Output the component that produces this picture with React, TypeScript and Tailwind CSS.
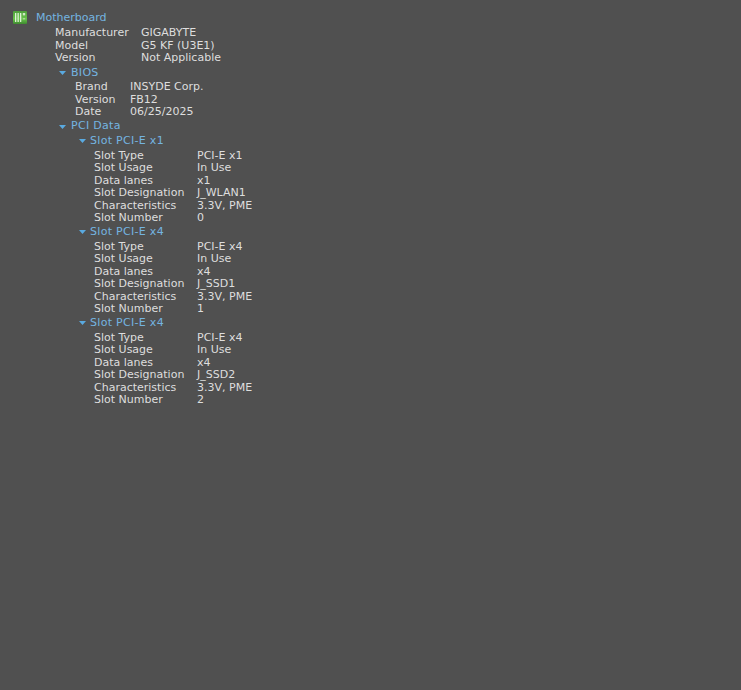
import React from 'react'

type Row = [string, string]

const slots: { title: string; rows: Row[] }[] = [
  {
    title: 'Slot PCI-E x1',
    rows: [
      ['Slot Type', 'PCI-E x1'],
      ['Slot Usage', 'In Use'],
      ['Data lanes', 'x1'],
      ['Slot Designation', 'J_WLAN1'],
      ['Characteristics', '3.3V, PME'],
      ['Slot Number', '0'],
    ],
  },
  {
    title: 'Slot PCI-E x4',
    rows: [
      ['Slot Type', 'PCI-E x4'],
      ['Slot Usage', 'In Use'],
      ['Data lanes', 'x4'],
      ['Slot Designation', 'J_SSD1'],
      ['Characteristics', '3.3V, PME'],
      ['Slot Number', '1'],
    ],
  },
  {
    title: 'Slot PCI-E x4',
    rows: [
      ['Slot Type', 'PCI-E x4'],
      ['Slot Usage', 'In Use'],
      ['Data lanes', 'x4'],
      ['Slot Designation', 'J_SSD2'],
      ['Characteristics', '3.3V, PME'],
      ['Slot Number', '2'],
    ],
  },
]

function BoardIcon() {
  return (
    <svg width="14" height="13" viewBox="0 0 14 13" className="block -mt-[2px]">
      <defs>
        <linearGradient id="board" x1="0" y1="0" x2="0" y2="1">
          <stop offset="0" stopColor="#4f9f3c" />
          <stop offset="0.6" stopColor="#68c44a" />
          <stop offset="1" stopColor="#3f8a30" />
        </linearGradient>
      </defs>
      <rect width="14" height="13" rx="1" fill="url(#board)" />
      <rect x="2" y="2" width="1.3" height="9" fill="#dff2d6" />
      <rect x="4.5" y="2" width="1.3" height="9" fill="#dff2d6" />
      <rect x="7" y="2" width="1.3" height="9" fill="#dff2d6" />
      <rect x="9.8" y="2" width="2.4" height="2.4" fill="#cfe9c4" />
      <rect x="9.8" y="7" width="2.4" height="1.5" fill="#a9d998" />
    </svg>
  )
}

function Header({ title, slot }: { title: string; slot?: boolean }) {
  return (
    <div
      className={
        slot
          ? 'flex items-center h-[16.6px] pb-px text-[#74b4e0] tracking-[0.3px]'
          : 'flex items-center h-[16.6px] text-[#74b4e0] tracking-[0.3px]'
      }
    >
      <svg width="7" height="4" viewBox="0 0 7 4" className="mr-[5px] shrink-0">
        <path d="M0 0h7L3.5 4z" fill="#5aaae0" />
      </svg>
      <span className={slot ? '-ml-px' : ''}>{title}</span>
    </div>
  )
}

function Rows({ rows, labelWidth }: { rows: Row[]; labelWidth: string }) {
  return (
    <div>
      {rows.map(([k, v], i) => (
        <div key={i} className="flex h-[12.4px] items-center whitespace-nowrap">
          <span className={labelWidth}>{k}</span>
          <span>{v}</span>
        </div>
      ))}
    </div>
  )
}

export default function App() {
  return (
    <div className="w-[741px] h-[690px] bg-[#505050] text-[#dedede] text-[11px] font-['DejaVu_Sans',sans-serif] overflow-hidden pt-[9px] pl-[13px]">
      <div className="flex items-center h-[18px] mb-[0.5px]">
        <BoardIcon />
        <span className="ml-[9px] text-[#74b4e0]">Motherboard</span>
      </div>
      <div className="pl-[42px]">
        <Rows
          labelWidth="w-[86px]"
          rows={[
            ['Manufacturer', 'GIGABYTE'],
            ['Model', 'G5 KF (U3E1)'],
            ['Version', 'Not Applicable'],
          ]}
        />
      </div>
      <div className="pl-[46px]">
        <Header title="BIOS" />
        <div className="pl-[16px]">
          <Rows
            labelWidth="w-[55px]"
            rows={[
              ['Brand', 'INSYDE Corp.'],
              ['Version', 'FB12'],
              ['Date', '06/25/2025'],
            ]}
          />
        </div>
        <Header title="PCI Data" />
        <div className="pl-[20px] -mt-[1.5px]">
          {slots.map((s, i) => (
            <div key={i}>
              <Header title={s.title} slot />
              <div className="pl-[15px]">
                <Rows labelWidth="w-[103px]" rows={s.rows} />
              </div>
            </div>
          ))}
        </div>
      </div>
    </div>
  )
}
